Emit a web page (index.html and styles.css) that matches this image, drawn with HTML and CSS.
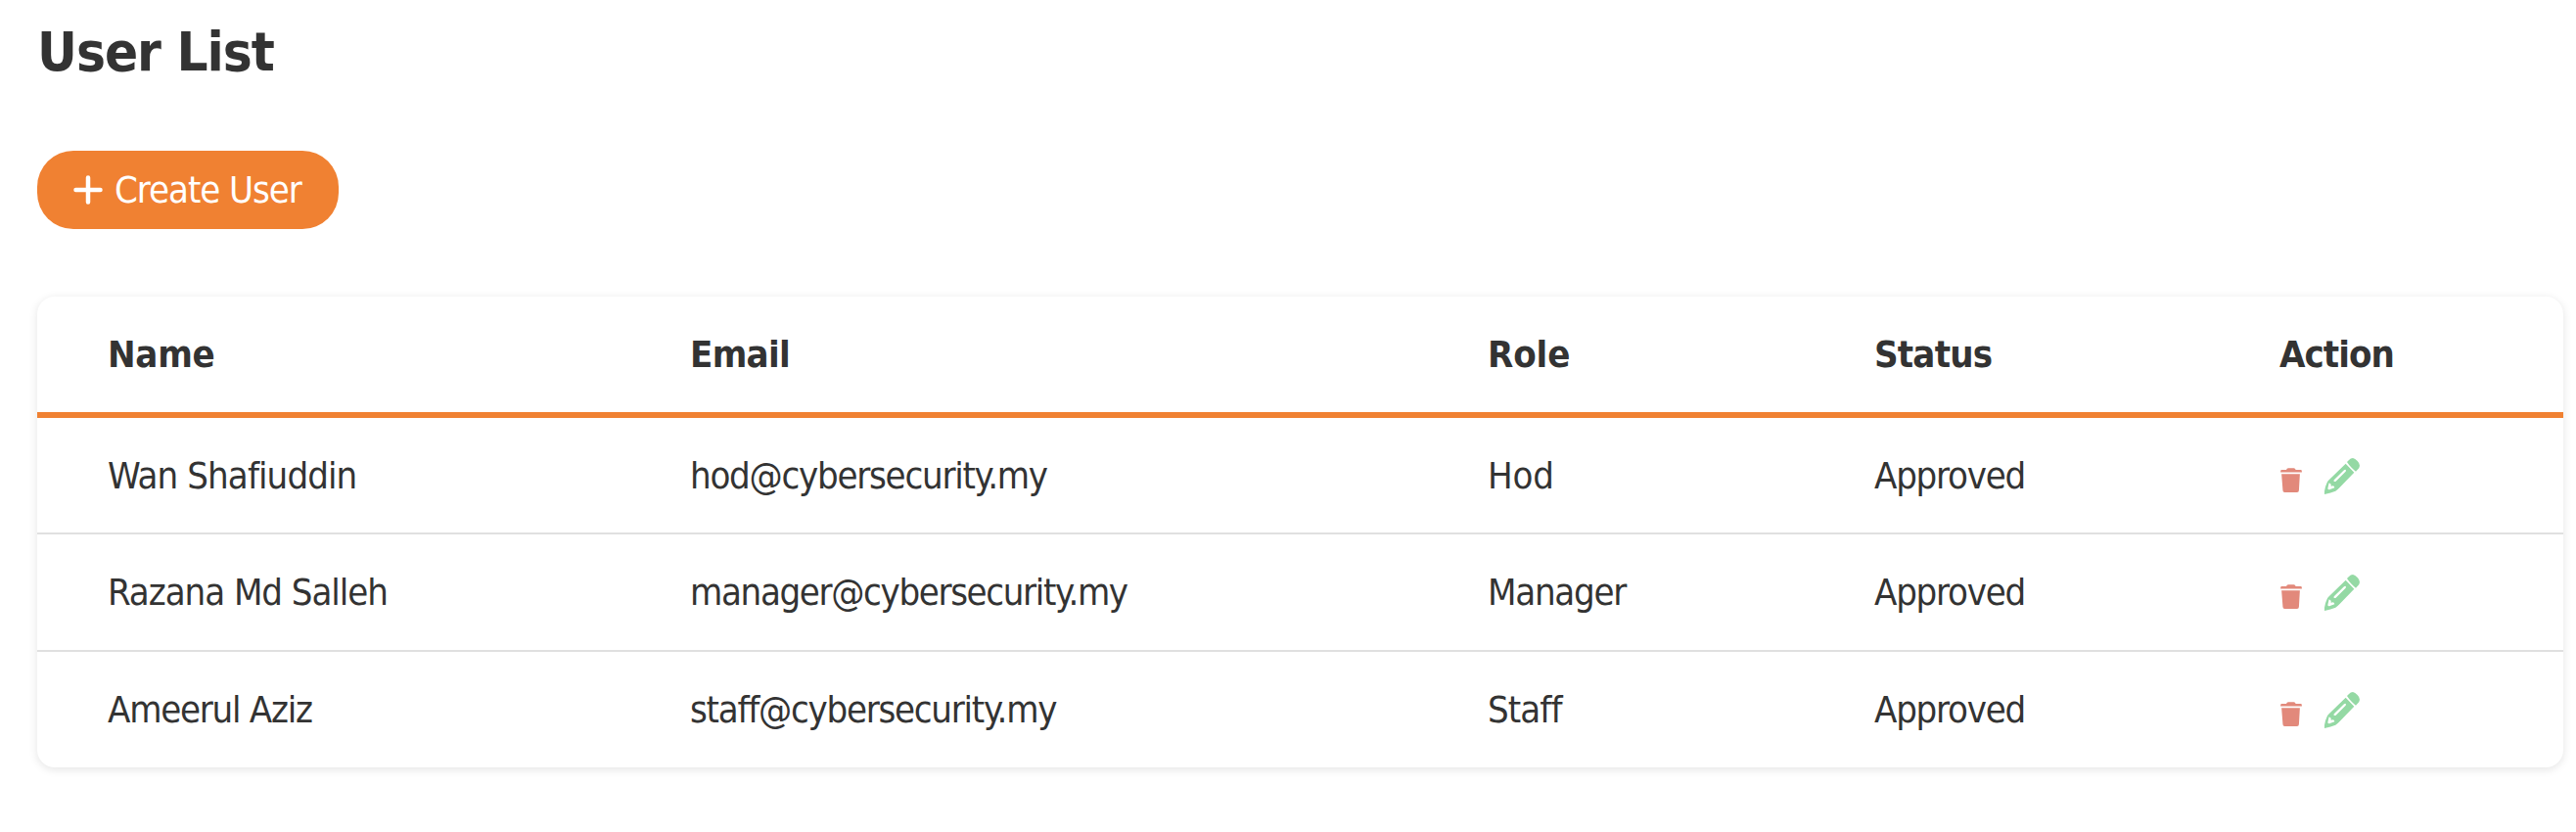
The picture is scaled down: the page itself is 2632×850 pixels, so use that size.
FILE: index.html
```
<!DOCTYPE html>
<html lang="en">
<head>
<meta charset="utf-8">
<title>User List</title>
<link rel="stylesheet" href="styles.css">
</head>
<body>
<svg class="sprite" aria-hidden="true">
  <symbol id="trash" viewBox="0 0 66 76">
    <path d="M4 6H18Q19 1 24 1H41Q46 1 47 6H62Q66 6 66 10V14H0V10Q0 6 4 6ZM3 19H60L57 70Q57 76 51 76H13Q7 76 7 70Z"/>
  </symbol>
  <symbol id="pencil" viewBox="0 0 108 111">
    <path fill-rule="evenodd" d="M69 12L75 6Q80 0 87 0Q94 2 101 9Q108 16 108 23Q107 30 103 34L96 41Q91 37 83 29Q74 20 69 12ZM65 17L91 44L46 91Q41 97 34 101Q20 106 0 111V101Q2 87 8 75Q10 71 14 67ZM60 37L30 66Q27 69 29 71Q32 73 35 71L65 41Q67 38 65 36Q63 34 60 37ZM14 76L10 94Q12 98 17 96L31 91Q31 88 27 85L20 86L20 80Z"/>
  </symbol>
</svg>
<main class="page">
  <h1 class="title">User List</h1>
  <button class="create" type="button">
    <svg class="plus" viewBox="0 0 30 30"><path d="M15 2.5V27.5M2.5 15H27.5"/></svg>
    <span class="create-label">Create User</span>
  </button>
  <section class="table">
    <div class="row head">
      <span class="name-head">Name</span><span class="email-head">Email</span><span class="role-head">Role</span><span class="status-head">Status</span><span class="action-head">Action</span>
    </div>
    <div class="row">
      <span class="wide">Wan Shafiuddin</span><span>hod@cybersecurity.my</span><span class="loose">Hod</span><span>Approved</span>
      <span class="actions"><svg class="trash"><use href="#trash"/></svg><svg class="pencil"><use href="#pencil"/></svg></span>
    </div>
    <div class="row tall">
      <span class="medium">Razana Md Salleh</span><span class="long">manager@cybersecurity.my</span><span>Manager</span><span>Approved</span>
      <span class="actions"><svg class="trash"><use href="#trash"/></svg><svg class="pencil"><use href="#pencil"/></svg></span>
    </div>
    <div class="row last">
      <span>Ameerul Aziz</span><span>staff@cybersecurity.my</span><span class="wide">Staff</span><span>Approved</span>
      <span class="actions"><svg class="trash"><use href="#trash"/></svg><svg class="pencil"><use href="#pencil"/></svg></span>
    </div>
  </section>
</main>
</body>
</html>
```
FILE: styles.css
```
* { box-sizing: border-box; }
body {
  margin: 0;
  background: #fff;
  color: #333;
  font-family: "DejaVu Sans Condensed", "DejaVu Sans", sans-serif;
  font-size: 38px;
  letter-spacing: -1.25px;
}
.sprite { display: none; }
.page {
  display: flex;
  flex-direction: column;
  align-items: flex-start;
  min-height: 850px;
  padding: 13px 13px 0 38px;
}
.title {
  margin: 0 0 61px;
  font-size: 56px;
  line-height: 80px;
  font-weight: 700;
  letter-spacing: -1px;
}
.create {
  display: flex;
  align-items: center;
  gap: 12px;
  width: 308px;
  height: 80px;
  padding: 0 0 0 37px;
  border: 0;
  border-radius: 37px;
  background: #f08132;
  color: #fff;
  font: inherit;
  letter-spacing: -1.05px;
}
.create-label { white-space: nowrap; line-height: 80px; }
.plus { width: 30px; height: 30px; fill: none; stroke: #fff; stroke-width: 4.5; stroke-linecap: round; }
.table {
  width: 100%;
  margin-top: 69px;
  border-radius: 18px;
  background: #fff;
  box-shadow: 0 2px 10px rgba(0, 0, 0, 0.11);
}
.row {
  display: grid;
  grid-template-columns: 595px 815px 395px 414px 1fr;
  height: 119px;
  padding: 0 0 0 72px;
  border-bottom: 2px solid #e0e0e0;
  line-height: 118px;
  white-space: nowrap;
}
.tall { height: 120px; }
.head {
  height: 124px;
  border-bottom: 6px solid #f08132;
  font-weight: 700;
}
.last { height: 118px; border-bottom: 0; }
.wide { letter-spacing: -0.9px; }
.medium { letter-spacing: -1.05px; }
.long { letter-spacing: -1.35px; }
.loose { letter-spacing: -0.2px; }
.name-head { letter-spacing: -0.25px; }
.email-head { letter-spacing: -0.7px; }
.role-head { letter-spacing: -0.1px; }
.status-head { letter-spacing: -0.8px; }
.action-head { letter-spacing: -0.95px; }
.actions { display: flex; align-items: flex-start; gap: 23px; padding: 41px 0 0 1px; }
.trash { width: 22px; height: 25px; margin-top: 10px; fill: #e2897b; }
.pencil { width: 36px; height: 37px; fill: #94d9a4; }
```
